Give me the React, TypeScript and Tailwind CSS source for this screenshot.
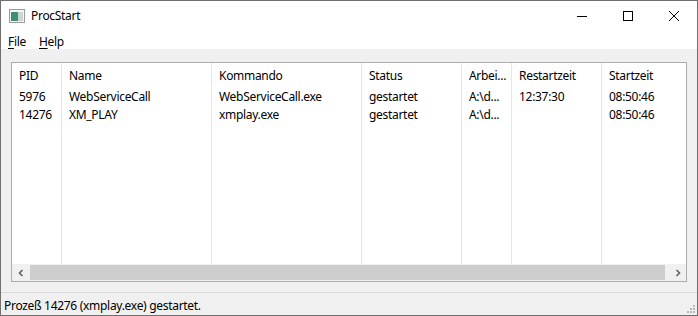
import { Fragment } from "react";

type Column = { title: string; width: number };

const columns: Column[] = [
  { title: "PID", width: 50 },
  { title: "Name", width: 150 },
  { title: "Kommando", width: 150 },
  { title: "Status", width: 100 },
  { title: "Arbei...", width: 50 },
  { title: "Restartzeit", width: 90 },
  { title: "Startzeit", width: 90 },
];

const rows: string[][] = [
  ["5976", "WebServiceCall", "WebServiceCall.exe", "gestartet", "A:\\d...", "12:37:30", "08:50:46"],
  ["14276", "XM_PLAY", "xmplay.exe", "gestartet", "A:\\d...", "", "08:50:46"],
];

function AppIcon() {
  return (
    <svg width="16" height="14" viewBox="0 0 16 14">
      <rect x="0.5" y="0.5" width="15" height="13" fill="#f4f4f4" stroke="#9a9a9a" />
      <rect x="2" y="3" width="7" height="9" fill="#3f8f74" />
      <rect x="9" y="3" width="5" height="9" fill="#c9d6d1" />
    </svg>
  );
}

function CaptionButtons() {
  return (
    <div className="flex h-full">
      <div className="flex w-[46px] items-center justify-center">
        <svg width="10" height="10" viewBox="0 0 10 10">
          <path d="M0 5.5h10" stroke="#000" strokeWidth="1" />
        </svg>
      </div>
      <div className="flex w-[46px] items-center justify-center">
        <svg width="10" height="10" viewBox="0 0 10 10">
          <rect x="0.5" y="0.5" width="9" height="9" fill="none" stroke="#000" strokeWidth="1" />
        </svg>
      </div>
      <div className="flex w-[46px] items-center justify-center">
        <svg width="10" height="10" viewBox="0 0 10 10">
          <path d="M0 0L10 10M10 0L0 10" stroke="#000" strokeWidth="1" />
        </svg>
      </div>
    </div>
  );
}

function ScrollBar() {
  return (
    <div className="flex h-[17px] shrink-0 items-stretch bg-[#f0f0f0]">
      <div className="flex w-[17px] items-center justify-center">
        <svg width="8" height="8" viewBox="0 0 8 8">
          <path d="M5.5 1L2.5 4L5.5 7" fill="none" stroke="#606060" strokeWidth="1.6" />
        </svg>
      </div>
      <div className="my-[1px] ml-[1px] mr-[4px] flex-1 bg-[#cdcdcd]" />
      <div className="flex w-[17px] items-center justify-center">
        <svg width="8" height="8" viewBox="0 0 8 8">
          <path d="M2.5 1L5.5 4L2.5 7" fill="none" stroke="#606060" strokeWidth="1.6" />
        </svg>
      </div>
    </div>
  );
}

export default function App() {
  return (
    <div
      className="flex h-[316px] w-[698px] flex-col overflow-hidden border border-[#707070] bg-[#f0f0f0] text-[12px] tracking-[-0.3px] text-black"
      style={{ fontFamily: '"Noto Sans", "Segoe UI", sans-serif' }}
    >
      <div className="flex h-[30px] shrink-0 items-center bg-white">
        <div className="ml-[8px] flex items-center">
          <AppIcon />
        </div>
        <div className="ml-[6px] flex-1 leading-none">ProcStart</div>
        <CaptionButtons />
      </div>

      <div className="flex h-[18px] shrink-0 items-center gap-[13px] bg-white pl-[7px] pt-[3px] leading-none">
        <span>
          <span className="underline underline-offset-2">F</span>ile
        </span>
        <span>
          <span className="underline underline-offset-2">H</span>elp
        </span>
      </div>

      <div className="flex flex-1 flex-col px-[10px] pt-[13px]">
        <div className="flex h-[220px] flex-col overflow-hidden border border-[#adadad] bg-white">
          <div className="flex flex-1 overflow-hidden">
            {columns.map((col, ci) => (
              <div
                key={col.title}
                className="flex shrink-0 flex-col border-r border-[#e5e5e5]"
                style={{ width: col.width }}
              >
                <div className="flex h-[25px] shrink-0 items-center whitespace-nowrap pl-[7px]">
                  {col.title}
                </div>
                {rows.map((row, ri) => (
                  <Fragment key={ri}>
                    <div className="flex h-[18px] shrink-0 items-center whitespace-nowrap pl-[7px]">
                      {row[ci]}
                    </div>
                  </Fragment>
                ))}
              </div>
            ))}
          </div>
          <ScrollBar />
        </div>

        <div className="mt-[10px] h-[1px] -mx-[10px] bg-[#dadada]" />
        <div className="relative -mx-[10px] flex flex-1 items-center pl-[3px] pt-[3px]">
          Prozeß 14276 (xmplay.exe) gestartet.
          <svg className="absolute bottom-[1px] right-[1px]" width="10" height="10" viewBox="0 0 10 10">
            <rect x="7" y="1" width="2" height="2" fill="#b8b8b8" />
            <rect x="4" y="4" width="2" height="2" fill="#b8b8b8" />
            <rect x="7" y="4" width="2" height="2" fill="#b8b8b8" />
            <rect x="1" y="7" width="2" height="2" fill="#b8b8b8" />
            <rect x="4" y="7" width="2" height="2" fill="#b8b8b8" />
            <rect x="7" y="7" width="2" height="2" fill="#b8b8b8" />
          </svg>
        </div>
      </div>
    </div>
  );
}
